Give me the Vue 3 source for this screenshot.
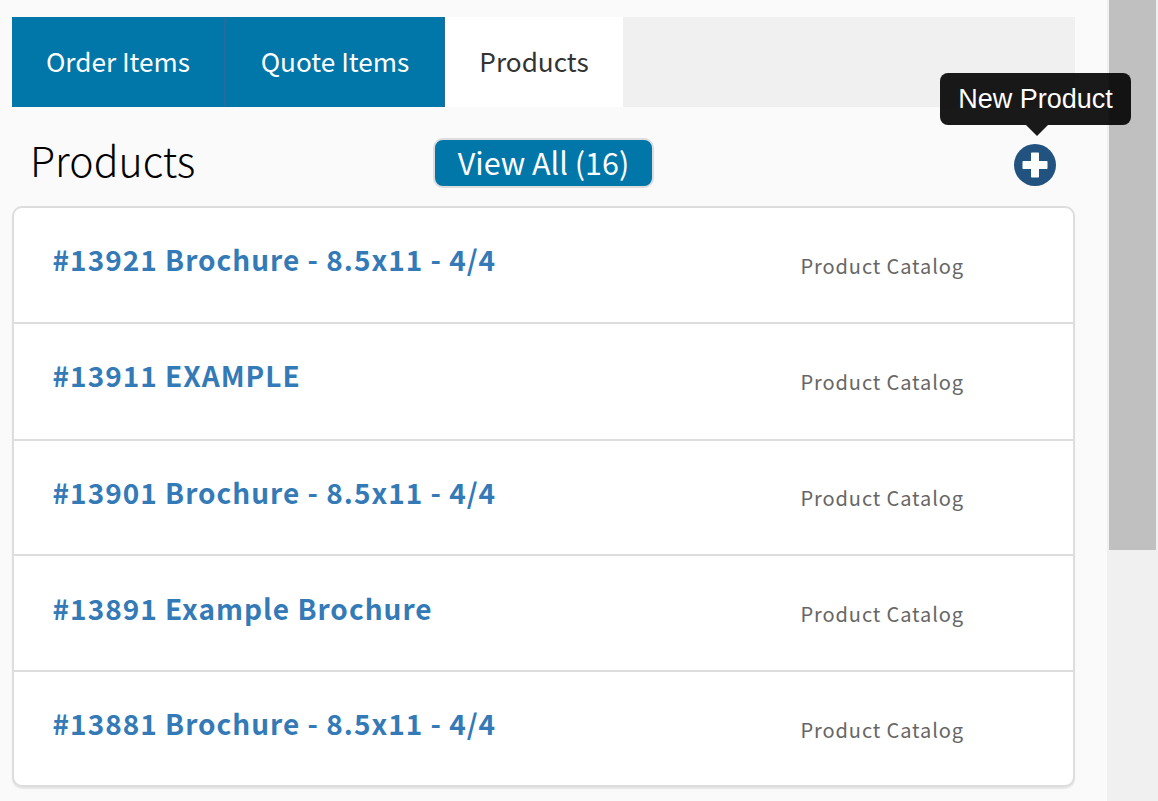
<script setup>
const tabs = [
  { label: 'Order Items', cls: 'tab-order' },
  { label: 'Quote Items', cls: 'tab-quote' },
  { label: 'Products', cls: 'tab-active' }
]
const rows = [
  { title: '#13921 Brochure - 8.5x11 - 4/4', h: 116 },
  { title: '#13911 EXAMPLE', h: 117 },
  { title: '#13901 Brochure - 8.5x11 - 4/4', h: 115 },
  { title: '#13891 Example Brochure', h: 116 },
  { title: '#13881 Brochure - 8.5x11 - 4/4', h: 113 }
]
</script>

<template>
  <div class="page">
    <main class="main">
      <nav class="tabs">
        <div v-for="t in tabs" :key="t.label" class="tab" :class="t.cls">{{ t.label }}</div>
      </nav>
      <header class="head">
        <h1 class="title">Products</h1>
        <button class="view-all">View All (16)</button>
        <div class="add">
          <div class="tooltip">New Product</div>
          <svg width="42" height="42" viewBox="0 0 42 42" aria-hidden="true">
            <circle cx="21" cy="21" r="21" fill="#22527f" />
            <path d="M17.750 9.250h6.500v8.500h8.500v6.500h-8.500v8.500h-6.500v-8.500h-8.500v-6.500h8.500z" fill="#fff" stroke="#fff" stroke-width="1.500" stroke-linejoin="round" />
          </svg>
        </div>
      </header>
      <section class="card">
        <div v-for="r in rows" :key="r.title" class="row" :style="{ height: r.h + 'px' }">
          <a class="name">{{ r.title }}</a>
          <span class="cat">Product Catalog</span>
        </div>
      </section>
    </main>
    <aside class="scrollbar"><div class="thumb"></div></aside>
  </div>
</template>

<style>
html, body { margin: 0; background: #fafafa; overflow: hidden; }
</style>

<style scoped>
.page {
  display: flex;
  width: 1158px;
  height: 801px;
  overflow: hidden;
  background: #fafafa;
  font-family: "Noto Sans CJK SC", "Noto Sans", sans-serif;
}
.main {
  width: 1063px;
  margin-left: 12px;
  padding-top: 17px;
  flex: none;
}
.tabs {
  display: flex;
  height: 90px;
  background: #f0f0f0;
}
.tab {
  display: flex;
  align-items: center;
  justify-content: center;
  padding-bottom: 3px;
  font-size: 26.2px;
  color: #fff;
  background: #0076a9;
  box-sizing: border-box;
}
.tab-order { width: 214px; border-right: 2px solid #2a6a9a; }
.tab-quote { width: 219px; border-right: 1px solid #2a6a9a; }
.tab-active { width: 178px; background: #fff; color: #333; }
.head {
  position: relative;
  display: flex;
  align-items: center;
  height: 99px;
}
.title {
  margin: 0 0 0 18px;
  width: 404px;
  font-size: 41px;
  font-weight: 300;
  color: #000;
  line-height: 1;
  position: relative;
  top: 3px;
}
.view-all {
  width: 221px;
  height: 50px;
  padding: 0;
  margin-top: 12px;
  margin-left: -1px;
  border: 2px solid #ddd;
  border-radius: 10px;
  background: #0076a9;
  color: #fff;
  font: 400 30.5px "Noto Sans CJK SC", "Noto Sans", sans-serif;
  line-height: 1;
}
.add {
  position: absolute;
  left: 1002px;
  top: 37px;
  width: 42px;
  height: 42px;
}
.add svg { display: block; }
.tooltip {
  position: absolute;
  left: -74px;
  top: -71px;
  width: 191px;
  height: 52px;
  display: flex;
  align-items: center;
  justify-content: center;
  border-radius: 8px;
  background: rgba(0, 0, 0, 0.9);
  color: #fff;
  font: 27px/1 "Liberation Sans", Arial, sans-serif;
  white-space: nowrap;
}
.tooltip::after {
  content: "";
  position: absolute;
  left: 86px;
  bottom: -11px;
  border-style: solid;
  border-width: 11px 11px 0;
  border-color: rgba(0, 0, 0, 0.9) transparent transparent;
}
.card {
  box-sizing: border-box;
  background: #fff;
  border: 2px solid #ddd;
  border-radius: 10px;
  box-shadow: 0 2px 1px rgba(0, 0, 0, 0.08);
  overflow: hidden;
}
.row {
  box-sizing: border-box;
  display: flex;
  align-items: flex-start;
  justify-content: space-between;
  padding: 0 109px 0 38.6px;
  border-bottom: 2px solid #ddd;
}
.row:last-child { border-bottom: 0; }
.name {
  margin-top: 31px;
  font-size: 28px;
  line-height: 40px;
  font-weight: 700;
  color: #337ab7;
  letter-spacing: 1px;
}
.row:nth-child(4) .name { margin-top: 32px; }
.cat {
  margin-top: 43px;
  font-size: 20px;
  line-height: 29px;
  color: #666;
  letter-spacing: 0.9px;
}
.row:nth-child(3) .cat { margin-top: 42px; }
.scrollbar {
  margin-left: 32px;
  flex: none;
  width: 51px;
  height: 801px;
  background: #f0f0f0;
}
.thumb {
  width: 47px;
  height: 550px;
  margin-left: 2px;
  background: #c0c0c0;
}
</style>
